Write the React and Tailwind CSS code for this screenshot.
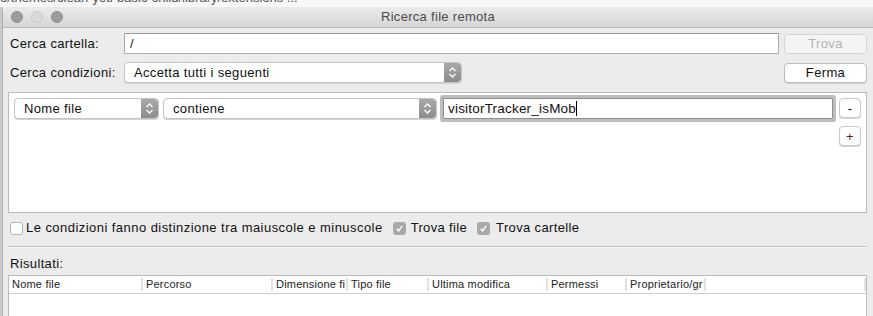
import React from "react";

const font = "font-['Liberation_Sans',Arial,sans-serif]";

// freccette su/giù del popup stile macOS
const Stepper = () => (
  <div className="w-[17px] h-full shrink-0 rounded-r-[4px] bg-gradient-to-b from-[#a9a9a9] to-[#8c8c8c] flex items-center justify-center">
    <svg width="9" height="13" viewBox="0 0 9 13" fill="none" stroke="white" strokeWidth="1.3">
      <path d="M1.5 5 L4.5 2 L7.5 5" />
      <path d="M1.5 8 L4.5 11 L7.5 8" />
    </svg>
  </div>
);

const Popup = ({ label, className }) => (
  <div
    className={`h-[21px] flex items-stretch rounded-[4px] border border-[#c4c4c4] bg-white shadow-[0_1px_0_#d4d4d4] ${className}`}
  >
    <span className="flex-1 pl-[9px] leading-[19px] text-[13px] tracking-[0.35px] text-[#111]">{label}</span>
    <Stepper />
  </div>
);

const Check = ({ checked }) =>
  checked ? (
    <span className="w-[13px] h-[13px] shrink-0 rounded-[3px] bg-[#a9a9a9] flex items-center justify-center">
      <svg width="9" height="9" viewBox="0 0 9 9" fill="none" stroke="white" strokeWidth="1.4">
        <path d="M1.8 4.8 L3.6 6.8 L7.2 1.8" />
      </svg>
    </span>
  ) : (
    <span className="w-[13px] h-[13px] shrink-0 rounded-[3px] border border-[#b3b3b3] bg-white" />
  );

const SmallBtn = ({ children, className = "" }) => (
  <div
    className={`w-[22px] h-[20px] rounded-[4px] border border-[#c8c8c8] bg-white shadow-[0_1px_0_#d6d6d6] flex items-center justify-center text-[13px] leading-none ${className}`}
  >
    {children}
  </div>
);

const columns = [
  { name: "Nome file", w: "w-[132px]" },
  { name: "Percorso", w: "w-[130px]" },
  { name: "Dimensione fi", w: "w-[75px]" },
  { name: "Tipo file", w: "w-[81px]" },
  { name: "Ultima modifica", w: "w-[119px]" },
  { name: "Permessi", w: "w-[79px]" },
  { name: "Proprietario/gr", w: "w-[79px]" },
];

export default function App() {
  return (
    <div className={`w-[873px] h-[316px] overflow-hidden bg-[#f7f7f7] ${font}`}>
      {/* percorso dietro la finestra, tagliato in alto */}
      <div className="h-[7px] overflow-hidden">
        <div className="-mt-[10px] leading-[16px] text-[13px] text-[#555] whitespace-nowrap">
          o/themes/clean-yeti-basic-child/library/extensions ...
        </div>
      </div>

      <div className="flex h-[309px]">
        <div className="w-[3px] shrink-0 bg-[#c9c9c9] border-r border-[#b0b0b0]" />

        {/* finestra */}
        <div className="flex-1 flex flex-col bg-[#ececec] rounded-tl-[5px] overflow-hidden">
          {/* barra del titolo */}
          <div className="h-[21px] shrink-0 grid grid-cols-[1fr_auto_1fr] items-center border-b border-[#b6b6b6] bg-gradient-to-b from-[#ebebeb] to-[#d6d6d6] rounded-tl-[5px]">
            <div className="flex gap-[8px] pl-[8px]">
              <span className="w-[12px] h-[12px] rounded-full bg-[#9c9c9c] border border-[#8c8c8c]" />
              <span className="w-[12px] h-[12px] rounded-full bg-[#dadada] border border-[#c6c6c6]" />
              <span className="w-[12px] h-[12px] rounded-full bg-[#9c9c9c] border border-[#8c8c8c]" />
            </div>
            <div className="text-[13px] tracking-[0.3px] text-[#4b4b4b]">Ricerca file remota</div>
            <div />
          </div>

          {/* contenuto */}
          <div className="flex-1 flex flex-col pl-[5px] pr-[6px] pt-[5px] text-[13px] tracking-[0.35px] text-[#111]">
            <div className="flex items-center h-[21px]">
              <span className="w-[116px] pl-[2px]">Cerca cartella:</span>
              <div className="w-[655px] h-[21px] border border-[#acacac] border-t-[#9a9a9a] bg-white pl-[5px] leading-[19px]">
                /
              </div>
              <div className="ml-[5px] w-[83px] h-[20px] rounded-[4px] border border-[#d6d6d6] bg-[#f4f4f4] flex items-center justify-center text-[#b3b3b3]">
                Trova
              </div>
            </div>

            <div className="flex items-center h-[21px] mt-[8px]">
              <span className="w-[116px] pl-[2px]">Cerca condizioni:</span>
              <Popup label="Accetta tutti i seguenti" className="w-[338px]" />
              <div className="ml-auto w-[83px] h-[20px] rounded-[4px] border border-[#bdbdbd] bg-white shadow-[0_1px_0_#d0d0d0] flex items-center justify-center">
                Ferma
              </div>
            </div>

            {/* box condizioni */}
            <div className="mt-[9px] h-[121px] border border-[#bcbcbc] bg-white pl-[5px] pr-[5px] pt-[5px]">
              <div className="flex items-start">
                <Popup label="Nome file" className="w-[145px]" />
                <Popup label="contiene" className="w-[274px] ml-[4px]" />
                <div className="ml-[6px] w-[390px] h-[21px] border border-[#8e8e8e] bg-white shadow-[0_0_0_3px_#bebebe] rounded-[1px] pl-[4px] leading-[19px] text-[13.5px] tracking-[0.2px] flex items-center">
                  visitorTracker_isMob
                  <span className="w-[1px] h-[15px] bg-black" />
                </div>
                <div className="ml-[6px] flex flex-col gap-[8px]">
                  <SmallBtn>-</SmallBtn>
                  <SmallBtn className="text-[#5a1f1f]">+</SmallBtn>
                </div>
              </div>
            </div>

            {/* opzioni */}
            <div className="mt-[8px] h-[14px] flex items-center pl-[2px]">
              <Check />
              <span className="ml-[3px] tracking-[0.45px]">Le condizioni fanno distinzione tra maiuscole e minuscole</span>
              <span className="ml-[10px]"><Check checked /></span>
              <span className="ml-[5px]">Trova file</span>
              <span className="ml-[10px]"><Check checked /></span>
              <span className="ml-[6px]">Trova cartelle</span>
            </div>

            <div className="mt-[11px] h-[2px] border-t border-[#c3c3c3] border-b border-b-[#f6f6f6]" />

            <div className="mt-[8px] pl-[2px] leading-[16px]">Risultati:</div>

            {/* tabella risultati */}
            <div className="mt-[3px] flex-1 border border-[#bcbcbc] border-b-0 bg-white">
              <div className="h-[18px] flex items-center border-b border-[#cfcfcf] text-[11px] tracking-[0.2px] text-[#222]">
                {columns.map((c, i) => (
                  <div key={c.name} className={`${c.w} h-full flex items-center shrink-0`}>
                    {i > 0 && <span className="w-[2px] h-[13px] bg-[#e2e2e2] mr-[3px]" />}
                    <span className={`${i === 0 ? "pl-[3px]" : ""} whitespace-nowrap overflow-hidden`}>{c.name}</span>
                  </div>
                ))}
                <span className="w-[2px] h-[13px] bg-[#e2e2e2]" />
                <div className="flex-1" />
                <span className="w-[2px] h-[13px] bg-[#e2e2e2]" />
              </div>
            </div>
          </div>
        </div>
      </div>
    </div>
  );
}
